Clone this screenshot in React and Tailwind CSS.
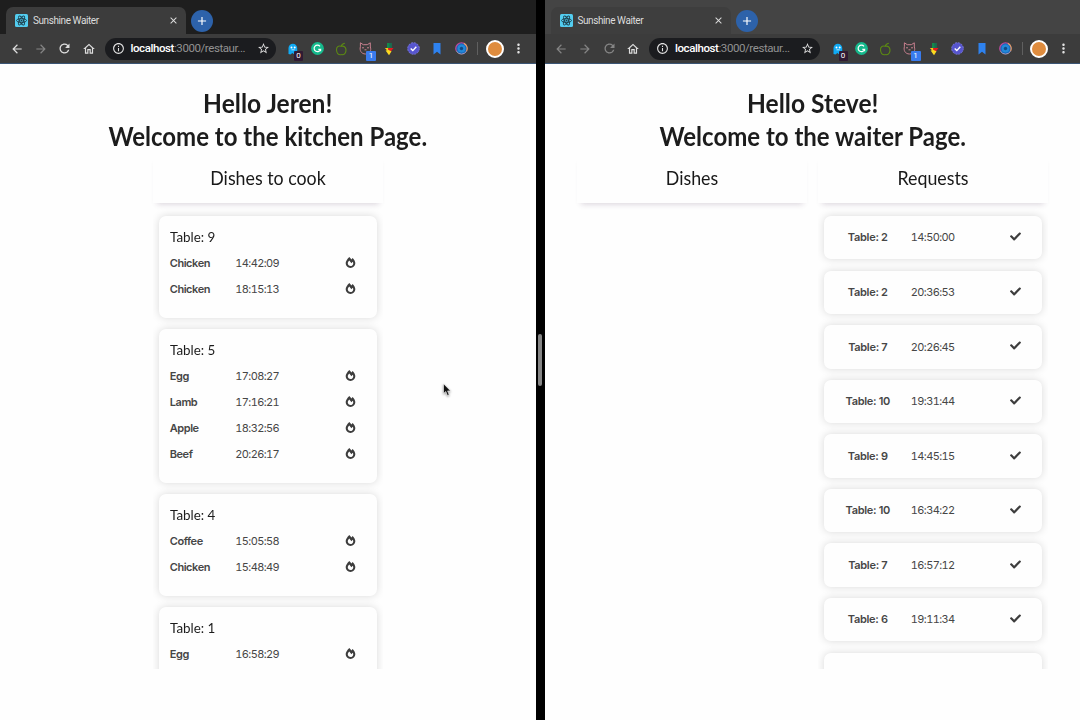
import React from "react";
import { FaFireAlt, FaCheck } from "react-icons/fa";
import { MdArrowBack, MdArrowForward, MdRefresh, MdOutlineHome, MdInfoOutline, MdStarBorder, MdMoreVert, MdClose, MdAdd } from "react-icons/md";

function Favicon() {
  return (
    <svg viewBox="0 0 13 13" className="h-[13px] w-[13px] shrink-0">
      <rect width="13" height="13" rx="1.5" fill="#53cdf0" />
      <g fill="none" stroke="#1d3d4a" strokeWidth="0.9">
        <ellipse cx="6.5" cy="6.5" rx="5" ry="2" />
        <ellipse cx="6.5" cy="6.5" rx="5" ry="2" transform="rotate(60 6.5 6.5)" />
        <ellipse cx="6.5" cy="6.5" rx="5" ry="2" transform="rotate(120 6.5 6.5)" />
      </g>
      <circle cx="6.5" cy="6.5" r="1" fill="#1d3d4a" />
    </svg>
  );
}

function Slot({ children }) {
  return <div className="relative flex h-6 w-6 shrink-0 items-center justify-center">{children}</div>;
}

function Extensions() {
  return (
    <>
      <Slot>
        <svg viewBox="0 0 12 12" className="h-3 w-3">
          <path d="M1.5 11 V5 A4.3 4.3 0 0 1 10.2 5 V11 L8.5 10 L7 11.3 L5.3 10 L3.5 11.5 Z" fill="#10aaf4" />
          <circle cx="4.5" cy="4.4" r="1" fill="#fff" />
          <circle cx="7.7" cy="4.4" r="1" fill="#fff" />
          <path d="M4.5 6.8 H7.7" stroke="#fff" strokeWidth="0.7" />
        </svg>
        <span className="absolute left-[13px] top-[14px] flex h-[10px] w-[9px] items-center justify-center rounded-[1px] bg-[#301a33] text-[8px] leading-none text-white">0</span>
      </Slot>
      <Slot>
        <svg viewBox="0 0 13 13" className="h-[13px] w-[13px]">
          <circle cx="6.5" cy="6.5" r="6.4" fill="#15b98c" />
          <path d="M9 4.3 A3.3 3.3 0 1 0 9.6 7.3 H7.3 M9.6 7.3 V9.3" fill="none" stroke="#fff" strokeWidth="1.2" />
        </svg>
      </Slot>
      <Slot>
        <svg viewBox="0 0 13 14" className="h-[14px] w-[13px]" fill="none" stroke="#5c8a12" strokeWidth="1.1">
          <path d="M6 4.3 C3.5 3.3 1.3 5 1.5 8 C1.8 11 3.4 12.8 5.3 12.8 C6.2 12.8 6.8 12.3 7.6 12.7 C9.7 13 11 10.3 11 8 C11 5 8.7 3.5 6 4.3 Z" />
          <path d="M6.3 4.2 C6.5 2.8 8 1.6 9.8 1.2" />
        </svg>
      </Slot>
      <Slot>
        <svg viewBox="0 0 13 13" className="h-[13px] w-[13px]" fill="none" stroke="#c8808f" strokeWidth="1">
          <path d="M1.4 4.8 V.8 L4.3 2.7 H8.3 L11.3 .8 V5 C12.6 8 11 12 6.5 12 C2 12 .4 8 1.4 4.8 Z" />
          <path d="M3 5.8 H5 M8 5.8 H10 M5.5 7.8 H7.5" />
        </svg>
        <span className="absolute left-[13px] top-[14px] flex h-[10px] w-[10px] items-center justify-center rounded-[1px] bg-[#397bed] text-[8px] leading-none text-white">1</span>
      </Slot>
      <Slot>
        <svg viewBox="0 0 10 14" className="h-[14px] w-[10px]">
          <path d="M3 1 H7.5 V6 H3 Z" fill="#13894b" />
          <path d="M5.4 1 H7.5 V6 H5.4 Z" fill="#176c51" />
          <path d="M.8 6 H5 L7 8 L5 10.2 Z" fill="#f7ca19" />
          <path d="M4 6 H9.5 L6.5 10 L4.3 8.3 Z" fill="#e41920" />
          <path d="M1.6 8.4 L5 13.3 L7.5 9.2 L4.5 8 Z" fill="#fddb20" />
        </svg>
      </Slot>
      <Slot>
        <svg viewBox="0 0 13 13" className="h-[13px] w-[13px]">
          <circle cx="6.5" cy="6.5" r="5.8" fill="#5755ce" stroke="#7876dc" strokeWidth="1" strokeDasharray="2 1" />
          <path d="M3.7 6.6 L5.8 8.6 L9.3 4.8" fill="none" stroke="#fff" strokeWidth="1.4" />
        </svg>
      </Slot>
      <Slot>
        <svg viewBox="0 0 8 12" className="h-3 w-2"><path d="M.5 0 H7.5 V11.5 L4 8.8 L.5 11.5 Z" fill="#2e82ef" /></svg>
      </Slot>
      <Slot>
        <svg viewBox="0 0 13 13" className="h-[13px] w-[13px]">
          <circle cx="6.5" cy="6.5" r="5.6" fill="#1768ba" />
          <path d="M1.4 9 A5.7 5.7 0 0 1 9 1.4" fill="none" stroke="#bd4a9c" strokeWidth="1.2" />
          <path d="M9 1.4 A5.7 5.7 0 0 1 11.6 9" fill="none" stroke="#f0a06c" strokeWidth="1.2" />
          <path d="M11.6 9 A5.7 5.7 0 0 1 1.4 9" fill="none" stroke="#b9a2c4" strokeWidth="0.9" />
          <circle cx="6.5" cy="6.5" r="3.9" fill="#2388d8" />
          <circle cx="6.5" cy="6.5" r="1.7" fill="#114a84" />
        </svg>
      </Slot>
    </>
  );
}

function Chrome({ focused }) {
  const dim = focused ? "text-[#dedede]" : "text-[#858585]";
  return (
    <header className="h-16 shrink-0 font-[Roboto,sans-serif]">
      <div className={`flex h-[34px] items-end pl-[6px] ${focused ? "bg-[#1e1e1e]" : "bg-[#444444]"}`}>
        <div className={`flex h-[27px] w-[180px] items-center rounded-t-[7px] pl-[9px] pr-[7px] ${focused ? "bg-[#3c3c3c]" : "bg-[#3e3e3e]"}`}>
          <Favicon />
          <span className="ml-[5px] flex-1 whitespace-nowrap text-[10px] tracking-[-0.42px] text-[#dcdcdc]">Sunshine Waiter</span>
          <MdClose className="h-[11px] w-[11px] text-[#dedede]" />
        </div>
        <div className="mb-[2px] ml-[5px] flex h-[22px] w-[22px] items-center justify-center rounded-full bg-[#2d62aa]">
          <MdAdd className="h-[14px] w-[14px] text-white" />
        </div>
      </div>
      <div className="flex h-[30px] items-center border-b border-[#3b5575] bg-[#3c3c3c] pl-[4.5px]">
        <Slot><MdArrowBack className={`h-[14px] w-[14px] ${dim}`} /></Slot>
        <Slot><MdArrowForward className="h-[14px] w-[14px] text-[#858585]" /></Slot>
        <Slot><MdRefresh className={`h-[15px] w-[15px] ${dim}`} /></Slot>
        <Slot><MdOutlineHome className="h-[14px] w-[14px] text-[#dedede]" /></Slot>
        <div className="ml-1 flex h-[22px] w-[171px] shrink-0 items-center rounded-full bg-[#1b1c1f] pl-[7px] pr-[6px]">
          <MdInfoOutline className="h-[13px] w-[13px] shrink-0 text-[#e2e2e2]" />
          <span className="ml-[6px] flex-1 whitespace-nowrap text-[11.5px] tracking-[-0.42px] text-[#929292]"><span className="font-medium text-white">localhost</span>:3000/restaur...</span>
          <MdStarBorder className="h-[13px] w-[13px] shrink-0 text-[#dedede]" />
        </div>
        <div className="ml-[5.5px] flex"><Extensions /></div>
        <div className="ml-[4px] h-[13px] w-px bg-[#606060]" />
        <div className="ml-[7.5px] h-[18px] w-[18px] shrink-0 rounded-full border-2 border-white bg-[#df8c3e]" />
        <div className="ml-[3px] flex"><Slot><MdMoreVert className="h-[15px] w-[15px] text-[#e2e2e2]" /></Slot></div>
      </div>
    </header>
  );
}

function Column({ title, children }) {
  return (
    <section className="flex h-full w-[230px] flex-col">
      <div className="h-[49px] shrink-0 bg-[#fefefe] text-center font-[Lato,sans-serif] text-[20px] leading-[46px] text-[#191919] shadow-[0_5px_6px_-4px_rgba(60,30,70,0.2)]">
        <div className="scale-x-[0.89]">{title}</div>
      </div>
      <div className="min-h-0 flex-1 overflow-hidden px-[6px] pt-[13px]">
        <div className="flex flex-col gap-[11.2px]">{children}</div>
      </div>
    </section>
  );
}

function OrderCard({ table, dishes }) {
  return (
    <article className="rounded-[7px] bg-[#fefefe] px-[11px] pb-[15.5px] pt-2 shadow-[0_0_9px_rgba(0,0,0,0.15)]">
      <h3 className="h-[26px] origin-left scale-x-[0.957] font-[Lato,sans-serif] text-[14px] leading-[25px] text-[#1c1c1c]">Table: {table}</h3>
      {dishes.map(([dish, time]) => (
        <div key={dish + time} className="flex h-[26.1px] items-center text-[11px] text-[#464646]">
          <span className="w-[65.5px] font-semibold tracking-[-0.45px]">{dish}</span>
          <span className="flex-1 tabular-nums tracking-[-0.6px]">{time}</span>
          <FaFireAlt className="mb-px mr-[10px] h-[11px] w-[11px] text-[#3d3d3d]" />
        </div>
      ))}
    </article>
  );
}

function RequestCard({ table, time }) {
  return (
    <article className="flex h-[43.4px] shrink-0 items-center rounded-[7px] bg-[#fefefe] pl-[11px] text-[11px] text-[#464646] shadow-[0_0_9px_rgba(0,0,0,0.15)]">
      <span className="w-[66px] text-center font-semibold tracking-[-0.3px]">Table: {table}</span>
      <span className="ml-[10px] flex-1 tabular-nums tracking-[-0.6px]">{time}</span>
      <FaCheck className="mb-[2px] mr-[21px] h-[11px] w-[11px] text-[#3d3d3d]" />
    </article>
  );
}

function Pane({ focused, name, page, children }) {
  return (
    <div className="flex h-full min-w-0 flex-1 flex-col bg-[#fefefe]">
      <Chrome focused={focused} />
      <h1 className="mt-[23px] mb-px text-center font-[Lato,sans-serif] text-[26px] font-bold leading-[33px] text-[#1c1c1c]">
        <span className="block scale-x-[0.945]">Hello {name}!</span>
        <span className="block scale-x-[0.923]">Welcome to the {page} Page.</span>
      </h1>
      <main className="flex h-[515px] justify-center gap-[11px] font-[Inter,sans-serif]">{children}</main>
    </div>
  );
}

const orders = [
  { table: 9, dishes: [["Chicken", "14:42:09"], ["Chicken", "18:15:13"]] },
  { table: 5, dishes: [["Egg", "17:08:27"], ["Lamb", "17:16:21"], ["Apple", "18:32:56"], ["Beef", "20:26:17"]] },
  { table: 4, dishes: [["Coffee", "15:05:58"], ["Chicken", "15:48:49"]] },
  { table: 1, dishes: [["Egg", "16:58:29"]] },
];

const requests = [[2, "14:50:00"], [2, "20:36:53"], [7, "20:26:45"], [10, "19:31:44"], [9, "14:45:15"], [10, "16:34:22"], [7, "16:57:12"], [6, "19:11:34"]];

export default function App() {
  return (
    <div className="relative flex h-[720px] w-[1080px] overflow-hidden bg-black">
      <Pane focused name="Jeren" page="kitchen">
        <Column title="Dishes to cook">
          {orders.map((o) => <OrderCard key={o.table} {...o} />)}
        </Column>
      </Pane>
      <div className="flex h-full w-[9px] shrink-0 items-center justify-center bg-black">
        <div className="h-[52px] w-1 rounded-full bg-[#858585]" />
      </div>
      <Pane name="Steve" page="waiter">
        <Column title="Dishes" />
        <Column title="Requests">
          {requests.map(([t, time]) => <RequestCard key={time} table={t} time={time} />)}
          <article className="h-[44px] shrink-0 rounded-[7px] bg-[#fefefe] shadow-[0_0_9px_rgba(0,0,0,0.15)]" />
        </Column>
      </Pane>
      <svg viewBox="0 0 9 14" className="absolute left-[442.5px] top-[383px] h-[14px] w-[9px] overflow-visible drop-shadow-[0_1px_1px_rgba(0,0,0,0.4)]">
        <path d="M.5 .7 V10.5 L2.8 8.5 L4.4 12.5 L6.2 11.7 L4.6 7.9 H7.6 Z" fill="#111" stroke="#fff" strokeWidth="0.6" />
      </svg>
    </div>
  );
}
